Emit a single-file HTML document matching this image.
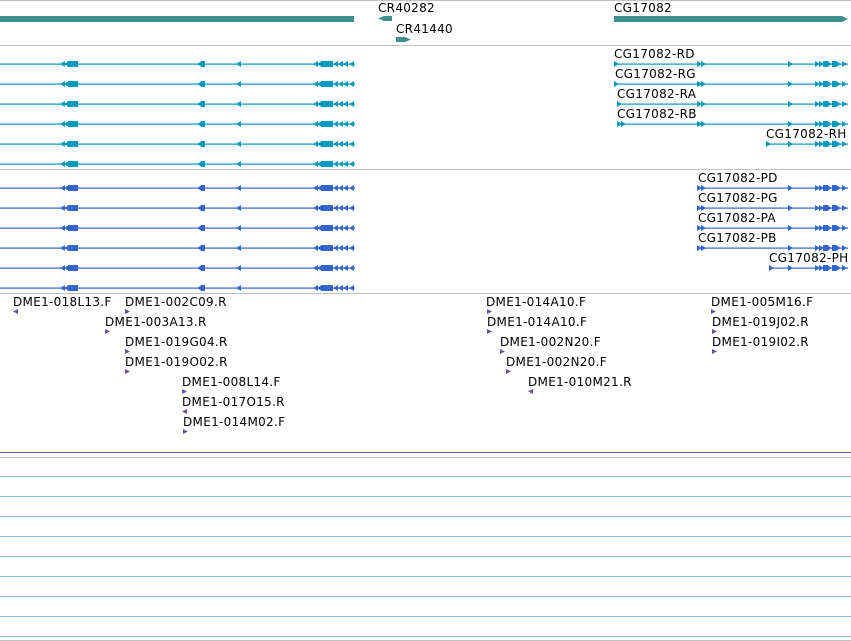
<!DOCTYPE html>
<html><head><meta charset="utf-8"><style>
html,body{margin:0;padding:0;background:#fff;width:851px;height:641px;overflow:hidden}
svg{display:block}
text{font-family:"DejaVu Sans","Liberation Sans",sans-serif;font-size:12px;fill:#000;letter-spacing:0.3px}
</style></head><body>
<svg width="851" height="641" viewBox="0 0 851 641" xmlns="http://www.w3.org/2000/svg">
<defs>
<g id="L">
  <rect x="0" y="-0.5" width="355" height="1.2"/>
  <polygon points="60,0 65,-3 65,3"/><polygon points="64,0 69,-3 69,3"/><rect x="68" y="-3" width="10" height="6"/>
  <polygon points="197,0 202,-3 202,3"/><rect x="201" y="-3" width="4" height="6"/>
  <polygon points="236,0 241,-3 241,3"/>
  <polygon points="313,0 318,-3 318,3"/><polygon points="317,0 322,-3 322,3"/><rect x="321" y="-3" width="12" height="6"/>
  <polygon points="333,0 338,-3 338,3"/><polygon points="338,0 343,-3 343,3"/><polygon points="343,0 348,-3 348,3"/><polygon points="349,0 354,-3 354,3"/>
</g>
<g id="Rc">
  <polygon points="697,-3 702,0 697,3"/><polygon points="701,-3 706,0 701,3"/>
  <polygon points="788,-3 793,0 788,3"/>
  <polygon points="815,-3 820,0 815,3"/><polygon points="819,-3 824,0 819,3"/><rect x="823" y="-3" width="5" height="6"/><polygon points="827,-3 832,0 827,3"/>
  <rect x="832" y="-3" width="4" height="6"/><polygon points="836,-3 841,0 836,3"/><polygon points="842,-3 847,0 842,3"/>
</g>
</defs>
<rect x="0" y="0" width="851" height="1" fill="#c0c0c0"/>
<rect x="0" y="45" width="851" height="1" fill="#c0c0c0"/>
<rect x="0" y="169" width="851" height="1" fill="#c0c0c0"/>
<rect x="0" y="293" width="851" height="1" fill="#c0c0c0"/>
<rect x="0" y="452" width="851" height="1" fill="#6a4fa8"/>
<rect x="0" y="457" width="851" height="1" fill="#c0c0c0"/>
<g fill="#86bde6">
<rect x="0" y="476" width="851" height="1"/><rect x="0" y="496" width="851" height="1"/><rect x="0" y="516" width="851" height="1"/>
<rect x="0" y="536" width="851" height="1"/><rect x="0" y="556" width="851" height="1"/><rect x="0" y="576" width="851" height="1"/>
<rect x="0" y="596" width="851" height="1"/><rect x="0" y="616" width="851" height="1"/><rect x="0" y="636" width="851" height="1"/>
</g>
<rect x="0" y="640" width="851" height="1" fill="#c0c0c0"/>

<g fill="#3f8f8f">
<rect x="0" y="16" width="354" height="6"/>
<polygon points="378,18.5 384,16 392,16 392,21 384,21"/>
<polygon points="396,37 405,37 411,39.5 405,42 396,42"/>
<polygon points="614,16 842,16 848,19 842,22 614,22"/>
</g>
<text x="378" y="12">CR40282</text>
<text x="396" y="33">CR41440</text>
<text x="614" y="12">CG17082</text>

<g fill="#0099c0">
<use href="#L" y="64"/><use href="#L" y="84"/><use href="#L" y="104"/><use href="#L" y="124"/><use href="#L" y="144"/><use href="#L" y="164"/>
<rect x="614" y="63.5" width="234" height="1.2"/><polygon points="614,61 619,64 614,67"/><use href="#Rc" y="64"/>
<rect x="614" y="83.5" width="234" height="1.2"/><polygon points="614,81 619,84 614,87"/><use href="#Rc" y="84"/>
<rect x="617" y="103.5" width="231" height="1.2"/><polygon points="617,101 622,104 617,107"/><use href="#Rc" y="104"/>
<rect x="617" y="123.5" width="231" height="1.2"/><polygon points="617,121 622,124 617,127"/><polygon points="621,121 626,124 621,127"/><use href="#Rc" y="124"/>
<rect x="766" y="143.5" width="82" height="1.2"/><polygon points="766,141 771,144 766,147"/><polygon points="788,141 793,144 788,147"/>
<g transform="translate(0,144)"><polygon points="815,-3 820,0 815,3"/><polygon points="819,-3 824,0 819,3"/><rect x="823" y="-3" width="5" height="6"/><polygon points="827,-3 832,0 827,3"/><rect x="832" y="-3" width="4" height="6"/><polygon points="836,-3 841,0 836,3"/><polygon points="842,-3 847,0 842,3"/></g>
</g>
<text x="614" y="58">CG17082-RD</text>
<text x="615" y="78">CG17082-RG</text>
<text x="617" y="98">CG17082-RA</text>
<text x="617" y="118">CG17082-RB</text>
<text x="766" y="138">CG17082-RH</text>

<g fill="#3366cc">
<use href="#L" y="188"/><use href="#L" y="208"/><use href="#L" y="228"/><use href="#L" y="248"/><use href="#L" y="268"/><use href="#L" y="288"/>
<rect x="698" y="187.5" width="150" height="1.2"/><use href="#Rc" y="188"/>
<rect x="698" y="207.5" width="150" height="1.2"/><use href="#Rc" y="208"/>
<rect x="698" y="227.5" width="150" height="1.2"/><use href="#Rc" y="228"/>
<rect x="698" y="247.5" width="150" height="1.2"/><use href="#Rc" y="248"/>
<rect x="769" y="267.5" width="79" height="1.2"/><polygon points="769,265 774,268 769,271"/><polygon points="788,265 793,268 788,271"/>
<g transform="translate(0,268)"><polygon points="815,-3 820,0 815,3"/><polygon points="819,-3 824,0 819,3"/><rect x="823" y="-3" width="5" height="6"/><polygon points="827,-3 832,0 827,3"/><rect x="832" y="-3" width="4" height="6"/><polygon points="836,-3 841,0 836,3"/><polygon points="842,-3 847,0 842,3"/></g>
</g>
<text x="698" y="182">CG17082-PD</text>
<text x="698" y="202">CG17082-PG</text>
<text x="698" y="222">CG17082-PA</text>
<text x="698" y="242">CG17082-PB</text>
<text x="769" y="262">CG17082-PH</text>

<g fill="#6a4fa8">
<polygon points="13,311.5 18,309 18,314"/>
<polygon points="125,309 130,311.5 125,314"/>
<polygon points="105,329 110,331.5 105,334"/>
<polygon points="125,349 130,351.5 125,354"/>
<polygon points="125,369 130,371.5 125,374"/>
<polygon points="182,389 187,391.5 182,394"/>
<polygon points="182,411.5 187,409 187,414"/>
<polygon points="183,429 188,431.5 183,434"/>
<polygon points="487,309 492,311.5 487,314"/>
<polygon points="487,329 492,331.5 487,334"/>
<polygon points="500,349 505,351.5 500,354"/>
<polygon points="506,369 511,371.5 506,374"/>
<polygon points="528,391.5 533,389 533,394"/>
<polygon points="711,309 716,311.5 711,314"/>
<polygon points="712,329 717,331.5 712,334"/>
<polygon points="712,349 717,351.5 712,354"/>
</g>
<text x="13" y="306">DME1-018L13.F</text>
<text x="125" y="306">DME1-002C09.R</text>
<text x="105" y="326">DME1-003A13.R</text>
<text x="125" y="346">DME1-019G04.R</text>
<text x="125" y="366">DME1-019O02.R</text>
<text x="182" y="386">DME1-008L14.F</text>
<text x="182" y="406">DME1-017O15.R</text>
<text x="183" y="426">DME1-014M02.F</text>
<text x="486" y="306">DME1-014A10.F</text>
<text x="487" y="326">DME1-014A10.F</text>
<text x="500" y="346">DME1-002N20.F</text>
<text x="506" y="366">DME1-002N20.F</text>
<text x="528" y="386">DME1-010M21.R</text>
<text x="711" y="306">DME1-005M16.F</text>
<text x="712" y="326">DME1-019J02.R</text>
<text x="712" y="346">DME1-019I02.R</text>
</svg>
</body></html>
